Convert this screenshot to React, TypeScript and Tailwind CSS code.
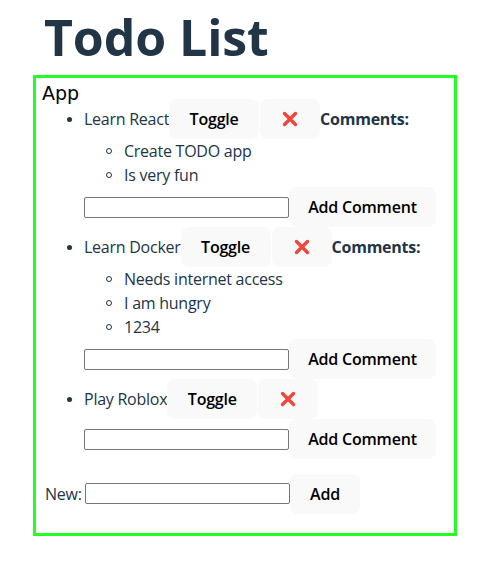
import { useState } from 'react';

type Todo = {
  id: number;
  text: string;
  done: boolean;
  comments: string[];
};

const initialTodos: Todo[] = [
  { id: 1, text: 'Learn React', done: false, comments: ['Create TODO app', 'Is very fun'] },
  { id: 2, text: 'Learn Docker', done: false, comments: ['Needs internet access', 'I am hungry', '1234'] },
  { id: 3, text: 'Play Roblox', done: false, comments: [] },
];

function CrossIcon() {
  return (
    <svg width="18" height="18" viewBox="0 0 18 18" aria-hidden="true">
      <path d="M3.5 3.5 L14.5 14.5 M14.5 3.5 L3.5 14.5" stroke="#f0453a" strokeWidth="3.4" strokeLinecap="round" fill="none" />
    </svg>
  );
}

function Btn({ children, onClick, className = '' }: { children: React.ReactNode; onClick?: () => void; className?: string }) {
  return (
    <button
      type="button"
      onClick={onClick}
      className={`flex h-[40px] shrink-0 items-center justify-center rounded-lg border border-transparent bg-[#f9f9f9] text-[16px] font-semibold tracking-[-0.2px] text-black ${className}`}
    >
      {children}
    </button>
  );
}

function TodoItem({ todo, onToggle, onDelete, onComment }: {
  todo: Todo;
  onToggle: () => void;
  onDelete: () => void;
  onComment: (c: string) => void;
}) {
  const [draft, setDraft] = useState('');

  return (
    <li className="flex flex-col">
      <div className="flex h-[40px] items-center">
        <div className="flex w-[40px] shrink-0 pl-[23px]">
          <span className="block h-[5px] w-[5px] rounded-full bg-[#213547]" />
        </div>
        <span className={todo.done ? 'line-through' : ''}>{todo.text}</span>
        <Btn onClick={onToggle} className="w-[90px]">Toggle</Btn>
        <Btn onClick={onDelete} className="ml-[1px] w-[60px]"><CrossIcon /></Btn>
        {todo.comments.length > 0 && <span className="font-bold">Comments:</span>}
      </div>
      {todo.comments.length > 0 && (
        <ul className="flex flex-col pl-[40px]">
          {todo.comments.map((c, i) => (
            <li key={i} className="flex h-[24px] items-center">
              <div className="flex w-[40px] shrink-0 pl-[22px]">
                <span className="block h-[6px] w-[6px] rounded-full border border-[#213547]" />
              </div>
              <span>{c}</span>
            </li>
          ))}
        </ul>
      )}
      <div className="flex h-[40px] items-center pl-[40px]">
        <input
          value={draft}
          onChange={(e) => setDraft(e.target.value)}
          className="h-[21px] w-[205px] rounded-[2px] border border-[#767676] bg-white px-1 text-[13px] outline-none"
        />
        <Btn
          className="w-[147px]"
          onClick={() => {
            if (draft.trim()) {
              onComment(draft.trim());
              setDraft('');
            }
          }}
        >
          Add Comment
        </Btn>
      </div>
    </li>
  );
}

export default function App() {
  const [todos, setTodos] = useState<Todo[]>(initialTodos);
  const [text, setText] = useState('');

  const add = () => {
    const t = text.trim();
    if (!t) return;
    setTodos((prev) => [...prev, { id: Date.now(), text: t, done: false, comments: [] }]);
    setText('');
  };

  return (
    <div className="min-h-[566px] bg-white pl-[33px] pt-[9px] font-['Open_Sans',sans-serif] text-[16px] leading-[24px] tracking-[-0.25px] text-[#213547]">
      <h1 className="pl-[11px] text-[50px] font-bold leading-[56px] tracking-[-0.1px]">Todo List</h1>
      <div className="mt-[10px] w-[424px] border-[3px] border-[#22ff22] pb-[20px] pl-[8px]">
        <div className="h-[21px] font-['DejaVu_Sans',sans-serif] text-[19px] leading-[30px] tracking-normal text-black">
          <span className="-ml-[2px]">App</span>
        </div>
        <ul className="flex flex-col">
          {todos.map((todo) => (
            <TodoItem
              key={todo.id}
              todo={todo}
              onToggle={() => setTodos((prev) => prev.map((x) => (x.id === todo.id ? { ...x, done: !x.done } : x)))}
              onDelete={() => setTodos((prev) => prev.filter((x) => x.id !== todo.id))}
              onComment={(c) => setTodos((prev) => prev.map((x) => (x.id === todo.id ? { ...x, comments: [...x.comments, c] } : x)))}
            />
          ))}
        </ul>
        <div className="mt-[15px] flex h-[39px] items-center pl-[1px]">
          <label className="w-[40px] shrink-0">New:</label>
          <input
            value={text}
            onChange={(e) => setText(e.target.value)}
            className="h-[21px] w-[205px] rounded-[2px] border border-[#767676] bg-white px-1 text-[13px] outline-none"
          />
          <Btn onClick={add} className="w-[70px]">Add</Btn>
        </div>
      </div>
    </div>
  );
}
